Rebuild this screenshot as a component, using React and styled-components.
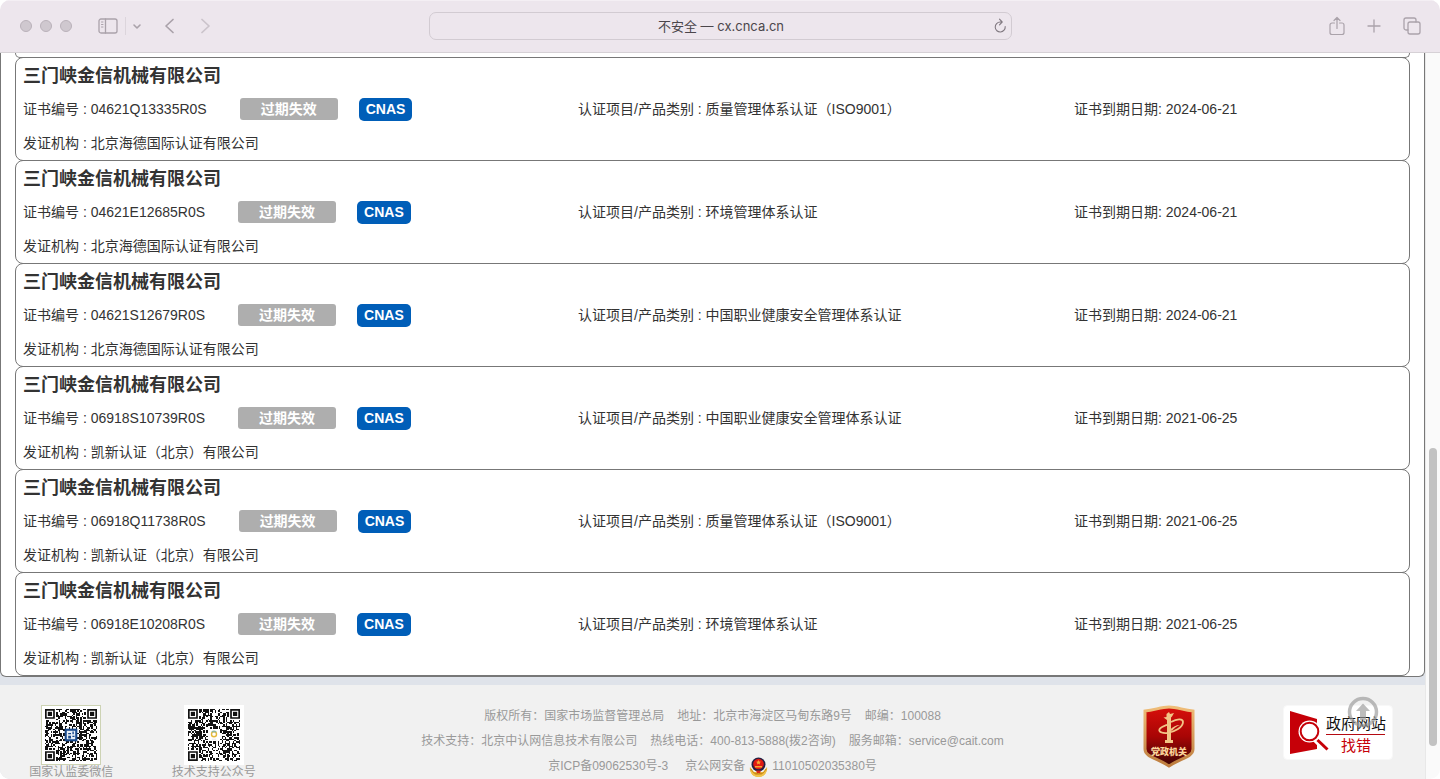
import React from "react";
import styled, { createGlobalStyle } from "styled-components";

const GlobalStyle = createGlobalStyle`
  *, *::before, *::after {
    box-sizing: border-box;
  }

  body {
    margin: 0;
    background: #fff;
    color: #333;
    font-family: "Liberation Sans", "Noto Sans CJK SC", sans-serif;
    font-size: 14px;
  }

  button {
    display: flex;
    padding: 0;
    border: 0;
    background: none;
    color: inherit;
  }
`;

const Window = styled.div`
  display: flex;
  flex-direction: column;
  height: 100vh;
  overflow: hidden;
  border-radius: 10px;
`;

const Toolbar = styled.header`
  display: grid;
  grid-template-columns: 1fr minmax(0, 583px) 1fr;
  align-items: center;
  flex: none;
  height: 53px;
  padding-bottom: 2px;
  background: #ede6ed;
  border-top: 1px solid #f4eff4;
  border-bottom: 1px solid #d6d1d6;
  color: #aaa2aa;
`;

const LeftTools = styled.div`
  display: flex;
  align-items: center;
  padding-left: 20px;
`;

const Lights = styled.div`
  display: flex;
  gap: 8px;
  margin-right: 26px;
`;

const Light = styled.button`
  width: 12px;
  height: 12px;
  border: 1px solid #bab2ba;
  border-radius: 50%;
  background: #cfc8cf;
`;

const Divider = styled.span`
  width: 1px;
  height: 18px;
  margin: 0 6px 0 7px;
  background: #dcd5dc;
`;

const Arrows = styled.div`
  display: flex;
  gap: 24px;
  margin-left: 22px;
`;

const ToolButton = styled.button`
  opacity: ${(props) => (props.disabled ? 0.5 : 1)};
`;

const AddressBar = styled.form`
  display: flex;
  align-items: center;
  height: 28px;
  margin: 0;
  padding: 0 4px 0 20px;
  border: 1px solid #d2cbd2;
  border-radius: 7px;
`;

const AddressInput = styled.input`
  flex: 1;
  min-width: 0;
  padding: 0;
  border: 0;
  outline: 0;
  background: none;
  color: #4b464b;
  font: 13px Inter, "Noto Sans CJK SC", sans-serif;
  text-align: center;
`;

const RightTools = styled.div`
  display: flex;
  align-items: center;
  justify-content: flex-end;
  gap: 22px;
  padding-right: 19px;
`;

const Viewport = styled.div`
  display: flex;
  flex: 1;
  min-height: 0;
`;

const Page = styled.main`
  display: flex;
  flex: 1;
  flex-direction: column;
  min-width: 0;
  overflow: hidden;
  background: #dfe3ea;
`;

const Panel = styled.section`
  flex: none;
  padding: 0 14px;
  border: 1px solid #777;
  border-top: 0;
  border-radius: 0 0 6px 6px;
  background: #fff;
`;

const Card = styled.article`
  height: 104px;
  margin-top: -1px;
  padding: 7px;
  border: 1px solid #777;
  border-radius: 8px;
`;

const CardTail = styled.div`
  height: 5px;
  border: 1px solid #777;
  border-top: 0;
  border-radius: 0 0 8px 8px;
`;

const Company = styled.h2`
  margin: 0;
  font-size: 18px;
  font-weight: 700;
  line-height: 22px;
`;

const Fields = styled.div`
  display: grid;
  grid-template-columns: 555fr 496fr 328fr;
  align-items: center;
  height: 44px;
`;

const Field = styled.div`
  display: flex;
  align-items: center;
  line-height: 22px;
`;

const Status = styled.span`
  width: 98px;
  height: 22px;
  margin: 0 21px 0 33px;
  border-radius: 3px;
  background: #aeaeae;
  color: #fff;
  font-weight: 700;
  text-align: center;
`;

const Accreditation = styled.span`
  height: 23px;
  padding: 0 7px;
  border-radius: 5px;
  background: #005eb8;
  color: #fff;
  font-weight: 700;
  line-height: 23px;
`;

const Agency = styled.p`
  margin: 0;
  line-height: 24px;
`;

const Footer = styled.footer`
  display: grid;
  grid-template-columns: 1fr 1fr 6fr 2fr;
  flex: 1 0 auto;
  margin-top: 8px;
  padding-top: 17px;
  background: #f1f1f1;
  color: #999;
  font-size: 12px;
`;

const CodeFigure = styled.figure`
  display: flex;
  flex-direction: column;
  align-items: center;
  margin: 0;
  padding-top: 3px;
`;

const CodeFrame = styled.div`
  width: 60px;
  height: 60px;
  padding: 3px;
  border: 1px solid ${(props) => props.$edge};
  background: #fff;
`;

const Caption = styled.figcaption`
  line-height: 14px;
  white-space: nowrap;
`;

const Legal = styled.div`
  padding-top: 2px;
  text-align: center;
`;

const LegalLine = styled.p`
  display: flex;
  justify-content: center;
  gap: ${(props) => (props.$wide ? 17 : 13)}px;
  margin: 0;
  line-height: 25px;
`;

const PoliceRecord = styled.span`
  display: flex;
  align-items: center;
  gap: 4px;
`;

const Badges = styled.div`
  display: flex;
  align-items: flex-start;
  justify-content: space-between;
  padding: 3px 32px 0 3px;
`;

const BadgeLink = styled.a`
  display: flex;
`;

const BackToTop = styled.button`
  position: fixed;
  right: 61px;
  bottom: 51px;
`;

const Scrollbar = styled.div`
  flex: none;
  width: 15px;
  padding: 395px 3px 0;
  border-left: 1px solid #e8e8e8;
  background: #fafafa;
`;

const Thumb = styled.div`
  width: 8px;
  height: 298px;
  border-radius: 4px;
  background: #c2c2c2;
`;

const certificates = [
  { no: "04621Q13335R0S", type: "质量管理体系认证（ISO9001）", expires: "2024-06-21", agency: "北京海德国际认证有限公司" },
  { no: "04621E12685R0S", type: "环境管理体系认证", expires: "2024-06-21", agency: "北京海德国际认证有限公司" },
  { no: "04621S12679R0S", type: "中国职业健康安全管理体系认证", expires: "2024-06-21", agency: "北京海德国际认证有限公司" },
  { no: "06918S10739R0S", type: "中国职业健康安全管理体系认证", expires: "2021-06-25", agency: "凯新认证（北京）有限公司" },
  { no: "06918Q11738R0S", type: "质量管理体系认证（ISO9001）", expires: "2021-06-25", agency: "凯新认证（北京）有限公司" },
  { no: "06918E10208R0S", type: "环境管理体系认证", expires: "2021-06-25", agency: "凯新认证（北京）有限公司" },
];

const stroke = {
  fill: "none",
  stroke: "currentColor",
  strokeLinecap: "round",
  strokeLinejoin: "round",
};

// One path with a square for every dark module
function codePath(seed) {
  let state = seed;
  let d = "";
  for (let y = 0; y < 37; y++) {
    for (let x = 0; x < 37; x++) {
      state = (state * 48271) % 2147483647;
      const finder = (x < 8 && y < 8) || (x > 28 && y < 8) || (x < 8 && y > 28);
      const center = x > 13 && x < 23 && y > 13 && y < 23;
      if (!finder && !center && state / 2147483647 > 0.5) {
        d += `M${x} ${y}h1v1h-1z`;
      }
    }
  }
  return d;
}

function QrCode({ seed, children }) {
  return (
    <svg width="52" height="52" viewBox="0 0 37 37">
      <path d={codePath(seed)} fill="#111" shapeRendering="crispEdges" />
      {[[0, 0], [30, 0], [0, 30]].map(([x, y]) => (
        <g key={`${x}-${y}`} transform={`translate(${x} ${y})`}>
          <path d="M.6.6h5.8v5.8H.6z" fill="none" stroke="#111" strokeWidth="1.2" />
          <path d="M2 2h3v3H2z" fill="#111" />
        </g>
      ))}
      {children}
    </svg>
  );
}

function PoliceIcon() {
  return (
    <svg width="19" height="20" viewBox="0 0 19 20">
      <path d="M1 10c-1 5 3 10 8.500 10S19 15 18 10l-4 5H5z" fill="#e9b738" />
      <path d="M2 12c2 4 4 5 7.500 5s6-1 7.500-5M5 18l4.500-2 4.500 2" fill="none" stroke="#c98516" />
      <circle cx="9.500" cy="7.500" r="7" fill="#222043" />
      <circle cx="9.500" cy="7" r="5.300" fill="#e01912" />
      <path d="M9.500 3l.8 1.500 1.600.2-1.200 1.200.3 1.600-1.500-.8-1.500.8.3-1.600-1.200-1.200 1.600-.2zM6 9h7v1.500H6z" fill="#f7a72f" />
      <path d="M7 13.500h5l-1 2.500H8z" fill="#d82718" />
      <path d="M2 13c1 3 4 5 7.500 5s6.500-2 7.500-5c1 4-3 7-7.500 7S1 17 2 13z" fill="#f0c24a" />
    </svg>
  );
}

function GovernmentBadge() {
  return (
    <svg width="52" height="63" viewBox="0 0 52 63">
      <defs>
        <linearGradient id="shield" x1="0" y1="0" x2="0" y2="1">
          <stop offset="0" stopColor="#d80f0b" />
          <stop offset=".5" stopColor="#a80505" />
          <stop offset="1" stopColor="#3c0504" />
        </linearGradient>
        <linearGradient id="rim" x1="0" y1="0" x2="0" y2="1">
          <stop offset="0" stopColor="#efbd78" />
          <stop offset="1" stopColor="#bd7c3d" />
        </linearGradient>
      </defs>
      <path
        d="M2 6C12 5 18 2 26 2s14 3 24 4v38c0 8-12 9-24 17C14 53 2 52 2 44z"
        fill="url(#shield)"
        stroke="url(#rim)"
        strokeWidth="3"
      />
      <g fill="#f2c486">
        <path d="M23.500 9l2.500-2 1 2 4-1-2 3.500-1 1V35h2v3h-8v-3h2V15l-3.500-2.500 3-.5z" />
      </g>
      <path
        d="M28 17c7-4 12-3 12 0 0 5-8 10-16 11-8 .500-10-3-5-6 3-2 6-2.500 9-2.500"
        fill="none"
        stroke="#f2c486"
        strokeWidth="1.800"
      />
      <path d="M27 25c2-3 6-5 10-5-3 1-6 3-8 6z" fill="#f2c486" />
      <text x="26" y="50" fill="#fbd49b" fontSize="9" fontWeight="900" textAnchor="middle">
        党政机关
      </text>
    </svg>
  );
}

function FindErrorBadge() {
  return (
    <svg width="110" height="55" viewBox="0 0 110 55">
      <rect x=".5" y=".5" width="109" height="54" rx="4" fill="#fff" stroke="#f8f8f8" />
      <path d="M7 6l27 8v30L7 49z" fill="#c60008" />
      <path d="M30 32l10 10" stroke="#fff" strokeWidth="6" />
      <circle cx="26.500" cy="26.500" r="11" fill="#fff" />
      <circle cx="26.500" cy="26.500" r="8.800" fill="#fff" stroke="#c60008" strokeWidth="2" />
      <path d="M34.500 35l10 9.500" stroke="#c60008" strokeWidth="3" />
      <text x="43" y="24" fill="#111" fontSize="15">政府网站</text>
      <path d="M43 29.500h59" stroke="#b40a12" />
      <text x="73" y="46" fill="#c60008" fontSize="15" textAnchor="middle">找错</text>
    </svg>
  );
}

function BrowserToolbar() {
  return (
    <Toolbar>
      <LeftTools>
        <Lights>
          <Light aria-label="关闭" />
          <Light aria-label="最小化" />
          <Light aria-label="缩放" />
        </Lights>
        <ToolButton aria-label="边栏">
          <svg width="20" height="16" viewBox="0 0 20 16" {...stroke} strokeWidth="1.300">
            <rect x="1" y="1" width="18" height="14" rx="2" />
            <path d="M7.500 1v14" />
            <path d="M3.500 4h1.500M3.500 6.500h1.500M3.500 9h1.500" strokeWidth="1" />
          </svg>
        </ToolButton>
        <Divider />
        <ToolButton aria-label="标签页组">
          <svg width="10" height="8" viewBox="0 0 10 8" {...stroke} strokeWidth="1.600">
            <path d="M2 3l3 3 3-3" />
          </svg>
        </ToolButton>
        <Arrows>
          <ToolButton aria-label="后退">
            <svg width="12" height="16" viewBox="0 0 12 16" {...stroke} strokeWidth="1.700">
              <path d="M9 1.500L2 8l7 6.500" />
            </svg>
          </ToolButton>
          <ToolButton aria-label="前进" disabled>
            <svg width="12" height="16" viewBox="0 0 12 16" {...stroke} strokeWidth="1.700">
              <path d="M2 1.500L9 8l-7 6.500" />
            </svg>
          </ToolButton>
        </Arrows>
      </LeftTools>
      <AddressBar>
        <AddressInput aria-label="网址" defaultValue="不安全 — cx.cnca.cn" />
        <ToolButton type="button" aria-label="重新载入">
          <svg width="14" height="16" viewBox="0 0 14 16" {...stroke} strokeWidth="1.100" stroke="#817981">
            <path d="M12.200 8.500A5 5 0 1 1 7.200 4h1.800M6.500 1.200L9.200 4 6.500 6.800" />
          </svg>
        </ToolButton>
      </AddressBar>
      <RightTools>
        <ToolButton aria-label="共享">
          <svg width="16" height="20" viewBox="0 0 16 20" {...stroke} strokeWidth="1.200">
            <path d="M5.500 7H3a2 2 0 0 0-2 2v7.500a2 2 0 0 0 2 2h10a2 2 0 0 0 2-2V9a2 2 0 0 0-2-2h-2.500M8 12.500V1.500M5 4.500l3-3 3 3" />
          </svg>
        </ToolButton>
        <ToolButton aria-label="新建标签页">
          <svg width="14" height="14" viewBox="0 0 14 14" {...stroke} strokeWidth="1.300">
            <path d="M7 1v12M1 7h12" />
          </svg>
        </ToolButton>
        <ToolButton aria-label="标签页概览">
          <svg width="18" height="18" viewBox="0 0 18 18" {...stroke} strokeWidth="1.300">
            <rect x="5" y="5" width="12" height="12" rx="2" />
            <path d="M5 13H3a2 2 0 0 1-2-2V3a2 2 0 0 1 2-2h8a2 2 0 0 1 2 2v2" />
          </svg>
        </ToolButton>
      </RightTools>
    </Toolbar>
  );
}

function CertificateCard({ item }) {
  return (
    <Card>
      <Company>三门峡金信机械有限公司</Company>
      <Fields>
        <Field>
          证书编号 : {item.no}
          <Status>过期失效</Status>
          <Accreditation>CNAS</Accreditation>
        </Field>
        <Field>认证项目/产品类别 : {item.type}</Field>
        <Field>证书到期日期: {item.expires}</Field>
      </Fields>
      <Agency>发证机构 : {item.agency}</Agency>
    </Card>
  );
}

function App() {
  return (
    <>
      <GlobalStyle />
      <Window>
        <BrowserToolbar />
        <Viewport>
          <Page>
            <Panel>
              <CardTail />
              {certificates.map((item) => (
                <CertificateCard key={item.no} item={item} />
              ))}
            </Panel>
            <Footer>
              <CodeFigure>
                <CodeFrame $edge="#cdd3b4">
                  <QrCode seed={4621}>
                    <rect x="14" y="14" width="9" height="9" fill="#17498c" />
                    <path d="M15.500 15.500h6v6h-6z" fill="#e6eef7" />
                    <path d="M16.500 17h2v1h-2zM16.500 19h2v2h-2zM19.500 16h1v2h-1zM19.500 19h1.500v1h-1.500z" fill="#17498c" />
                  </QrCode>
                </CodeFrame>
                <Caption>国家认监委微信</Caption>
              </CodeFigure>
              <CodeFigure>
                <CodeFrame $edge="#fff">
                  <QrCode seed={6918}>
                    <circle cx="18.500" cy="18" r="1.800" fill="none" stroke="#e5b93c" />
                    <path d="M17 16.500a2 2 0 0 1 3 0" fill="none" stroke="#8fb6a0" />
                    <path d="M17 21.500h3" stroke="#ddd" strokeWidth=".5" />
                  </QrCode>
                </CodeFrame>
                <Caption>技术支持公众号</Caption>
              </CodeFigure>
              <Legal>
                <LegalLine>
                  <span>版权所有：国家市场监督管理总局</span>
                  <span>地址：北京市海淀区马甸东路9号</span>
                  <span>邮编：100088</span>
                </LegalLine>
                <LegalLine>
                  <span>技术支持：北京中认网信息技术有限公司</span>
                  <span>热线电话：400-813-5888(拨2咨询)</span>
                  <span>服务邮箱：service@cait.com</span>
                </LegalLine>
                <LegalLine $wide>
                  <span>京ICP备09062530号-3</span>
                  <PoliceRecord>
                    京公网安备
                    <PoliceIcon />
                    11010502035380号
                  </PoliceRecord>
                </LegalLine>
              </Legal>
              <Badges>
                <BadgeLink href="#badge" aria-label="党政机关">
                  <GovernmentBadge />
                </BadgeLink>
                <BadgeLink href="#report" aria-label="政府网站找错">
                  <FindErrorBadge />
                </BadgeLink>
              </Badges>
            </Footer>
          </Page>
          <Scrollbar>
            <Thumb />
          </Scrollbar>
        </Viewport>
        <BackToTop aria-label="返回顶部">
          <svg width="32" height="32" viewBox="0 0 32 32" opacity=".65">
            <circle cx="16" cy="16" r="13.500" fill="none" stroke="#999" strokeWidth="3.500" />
            <path d="M16 7.500l7 7.500h-4v9h-6v-9H9z" fill="#999" />
          </svg>
        </BackToTop>
      </Window>
    </>
  );
}

export default App;
